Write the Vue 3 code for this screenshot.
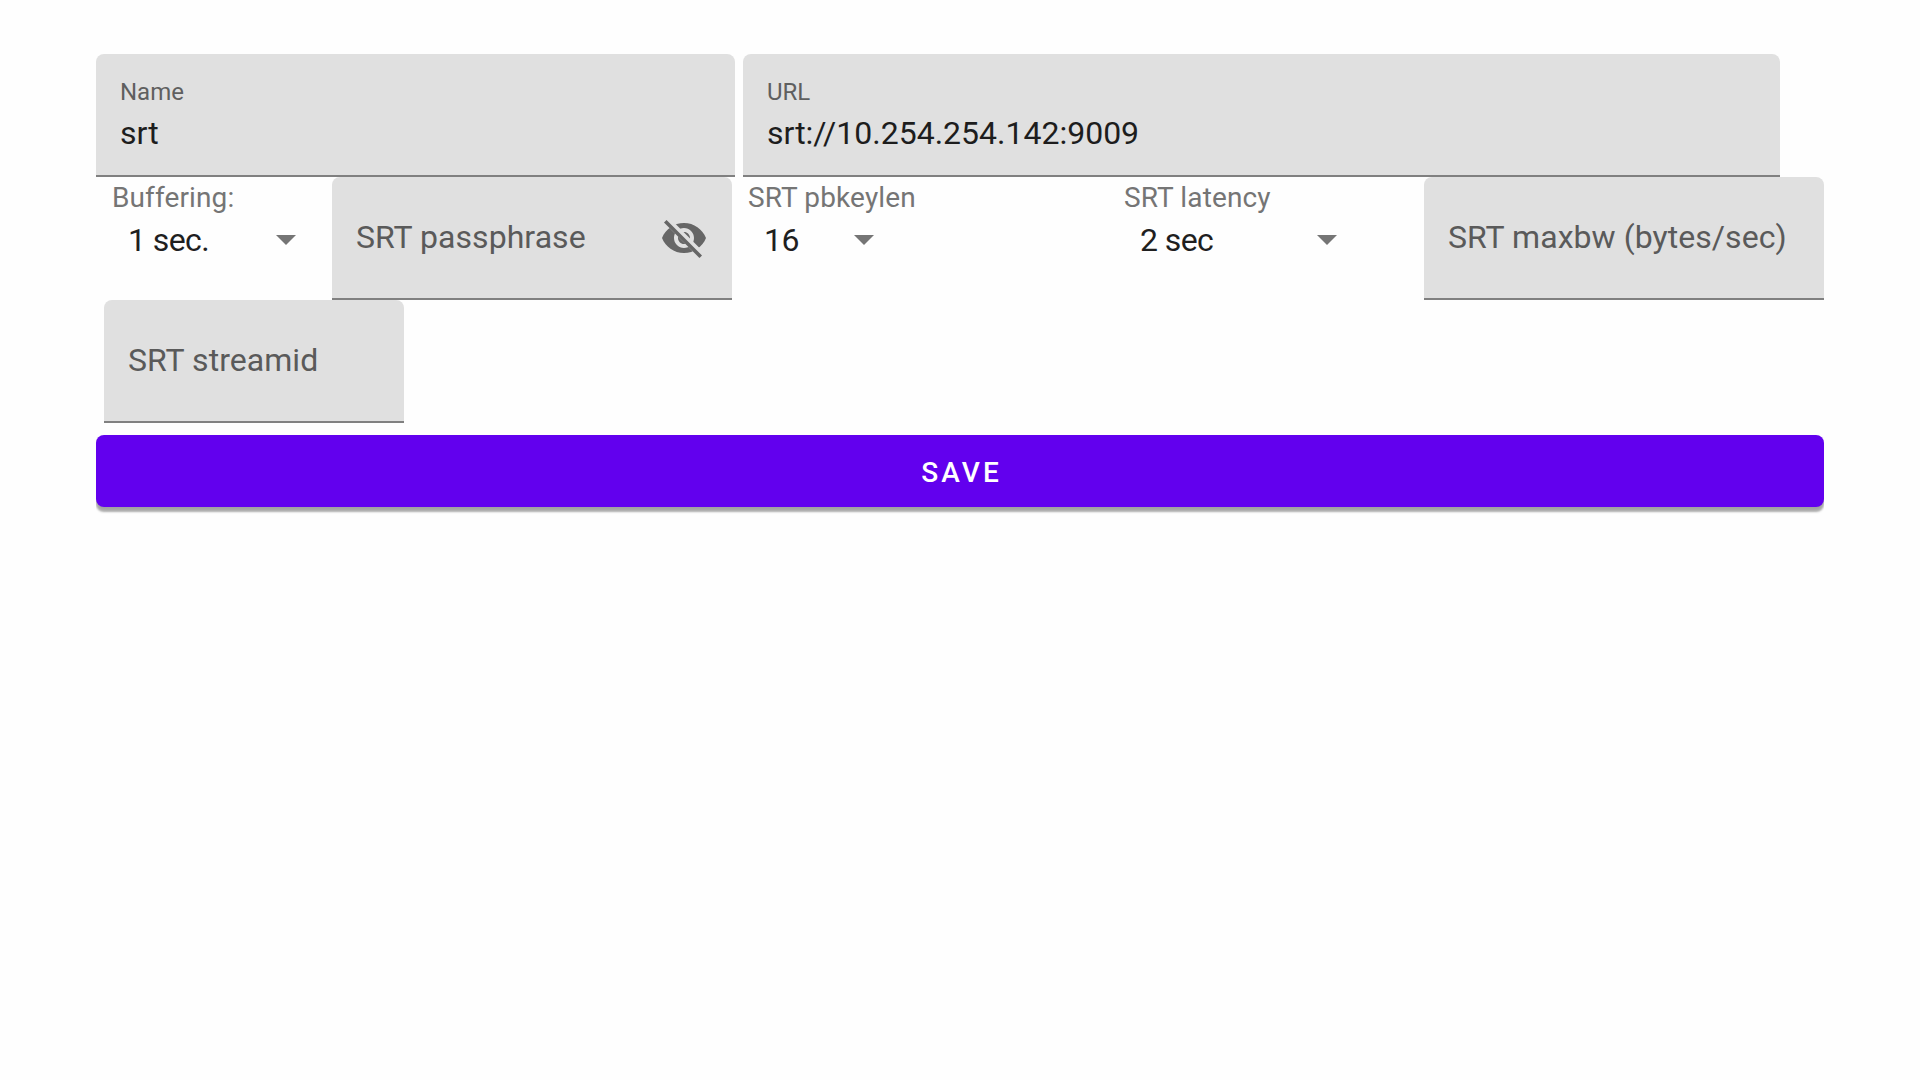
<script setup>
import {ref} from "vue";

const mainFields = ref([
  {
    key: "name",
    label: "Name",
    value: "srt"
  },
  {
    key: "url",
    label: "URL",
    value: "srt://10.254.254.142:9009"
  },
])

const options = ref([
  {
    type: "select",
    key: "buffering",
    label: "Buffering:",
    value: "1 sec."
  },
  {
    type: "text",
    key: "passphrase",
    label: "SRT passphrase",
    secret: true
  },
  {
    type: "select",
    key: "pbkeylen",
    label: "SRT pbkeylen",
    value: "16"
  },
  {
    type: "select",
    key: "latency",
    label: "SRT latency",
    value: "2 sec"
  },
  {
    type: "text",
    key: "maxbw",
    label: "SRT maxbw (bytes/sec)"
  },
  {
    type: "text",
    key: "streamid",
    label: "SRT streamid"
  },
])
</script>

<template>
  <div class="page">
    <div class="main-row">
      <div
          class="field"
          v-for="item in mainFields"
          :key="item.key"
          :class="item.key"
      >
        <div class="field-label">{{item.label}}</div>
        <div class="field-value">{{item.value}}</div>
      </div>
    </div>
    <div class="option-row">
      <template v-for="item in options" :key="item.key">
        <div v-if="item.type === 'select'" class="select" :class="item.key">
          <div class="select-label">{{item.label}}</div>
          <div class="select-box">
            <span>{{item.value}}</span>
            <svg class="arrow" viewBox="0 0 20 10">
              <path d="M0 0h20L10 10z"/>
            </svg>
          </div>
        </div>
        <div v-else class="field empty" :class="item.key">
          <div class="placeholder">{{item.label}}</div>
          <svg v-if="item.secret" class="eye" viewBox="0 0 24 24">
            <defs>
              <clipPath id="eye-clip">
                <path d="M2 4.27L19.73 22 22.27 19.46 4.54 1.73V1H23v22H1V4.27z"/>
              </clipPath>
            </defs>
            <path
                clip-path="url(#eye-clip)"
                fill="currentColor"
                d="M12 4.5C7 4.5 2.73 7.61 1 12c1.73 4.39 6 7.5 11 7.5s9.27-3.11 11-7.5c-1.73-4.39-6-7.5-11-7.5zM12 17c-2.76 0-5-2.24-5-5s2.24-5 5-5 5 2.24 5 5-2.24 5-5 5zm0-8c-1.66 0-3 1.34-3 3s1.34 3 3 3 3-1.34 3-3-1.34-3-3-3z"
            />
            <path
                d="M3.27 4.27L19.74 20.74"
                fill="none"
                stroke="currentColor"
                stroke-width="1.8"
                stroke-linecap="square"
            />
          </svg>
        </div>
      </template>
    </div>
    <div class="save-wrapper">
      <button class="save">SAVE</button>
    </div>
  </div>
</template>

<style>
body {
  background-color: #fefefe;
}
</style>

<style scoped>
.page {
  box-sizing: border-box;
  width: 1920px;
  padding: 54px 96px 0;
  font-family: Roboto, sans-serif;
}
.main-row {
  display: flex;
  gap: 8px;
}
.field {
  box-sizing: border-box;
  height: 123px;
  padding: 0 24px;
  border-bottom: 2px solid #808080;
  border-radius: 8px 8px 0 0;
  background-color: #e0e0e0;
}
.name {
  width: 639px;
}
.url {
  width: 1037px;
}
.field-label {
  padding-top: 24px;
  line-height: 28px;
  font-size: 24px;
  color: #5f5f5f;
}
.field-value {
  padding-top: 7px;
  line-height: 40px;
  font-size: 32px;
  color: #1d1d1d;
}
.option-row {
  display: flex;
  flex-wrap: wrap;
}
.empty {
  display: flex;
  align-items: center;
  justify-content: space-between;
}
.placeholder {
  line-height: 40px;
  padding-bottom: 1px;
  font-size: 32px;
  letter-spacing: 0.05px;
  white-space: nowrap;
  color: #5a5a5a;
}
.eye {
  width: 48px;
  height: 48px;
  color: #666;
}
.select {
  box-sizing: border-box;
  height: 123px;
  padding: 5px 0 0 16px;
}
.select-label {
  line-height: 32px;
  font-size: 28px;
  letter-spacing: 0.12px;
  white-space: nowrap;
  color: #757575;
}
.select-box {
  display: flex;
  align-items: center;
  justify-content: space-between;
  height: 52px;
  padding-left: 16px;
  line-height: 40px;
  font-size: 32px;
  letter-spacing: -0.6px;
  color: #1f1f1f;
}
.arrow {
  width: 20px;
  height: 10px;
  fill: #757575;
}
.buffering {
  width: 236px;
  padding-right: 36px;
}
.passphrase {
  width: 400px;
}
.pbkeylen {
  width: 376px;
  padding-right: 234px;
}
.latency {
  width: 316px;
  padding-right: 87px;
}
.maxbw {
  width: 400px;
}
.streamid {
  width: 300px;
  margin-left: 8px;
}
/* the shadow is cut off at both sides of the button */
.save-wrapper {
  padding: 12px 0;
  overflow: hidden;
}
.save {
  display: block;
  width: 100%;
  height: 72px;
  padding: 2px 0 0 3px;
  border: none;
  border-radius: 8px;
  background-color: #6200ee;
  box-shadow: 0 5px 2px rgba(0, 0, 0, 0.28), 0 3px 4px rgba(0, 0, 0, 0.14);
  font-family: inherit;
  font-size: 28px;
  font-weight: 500;
  letter-spacing: 3.1px;
  color: #fff;
}
</style>
